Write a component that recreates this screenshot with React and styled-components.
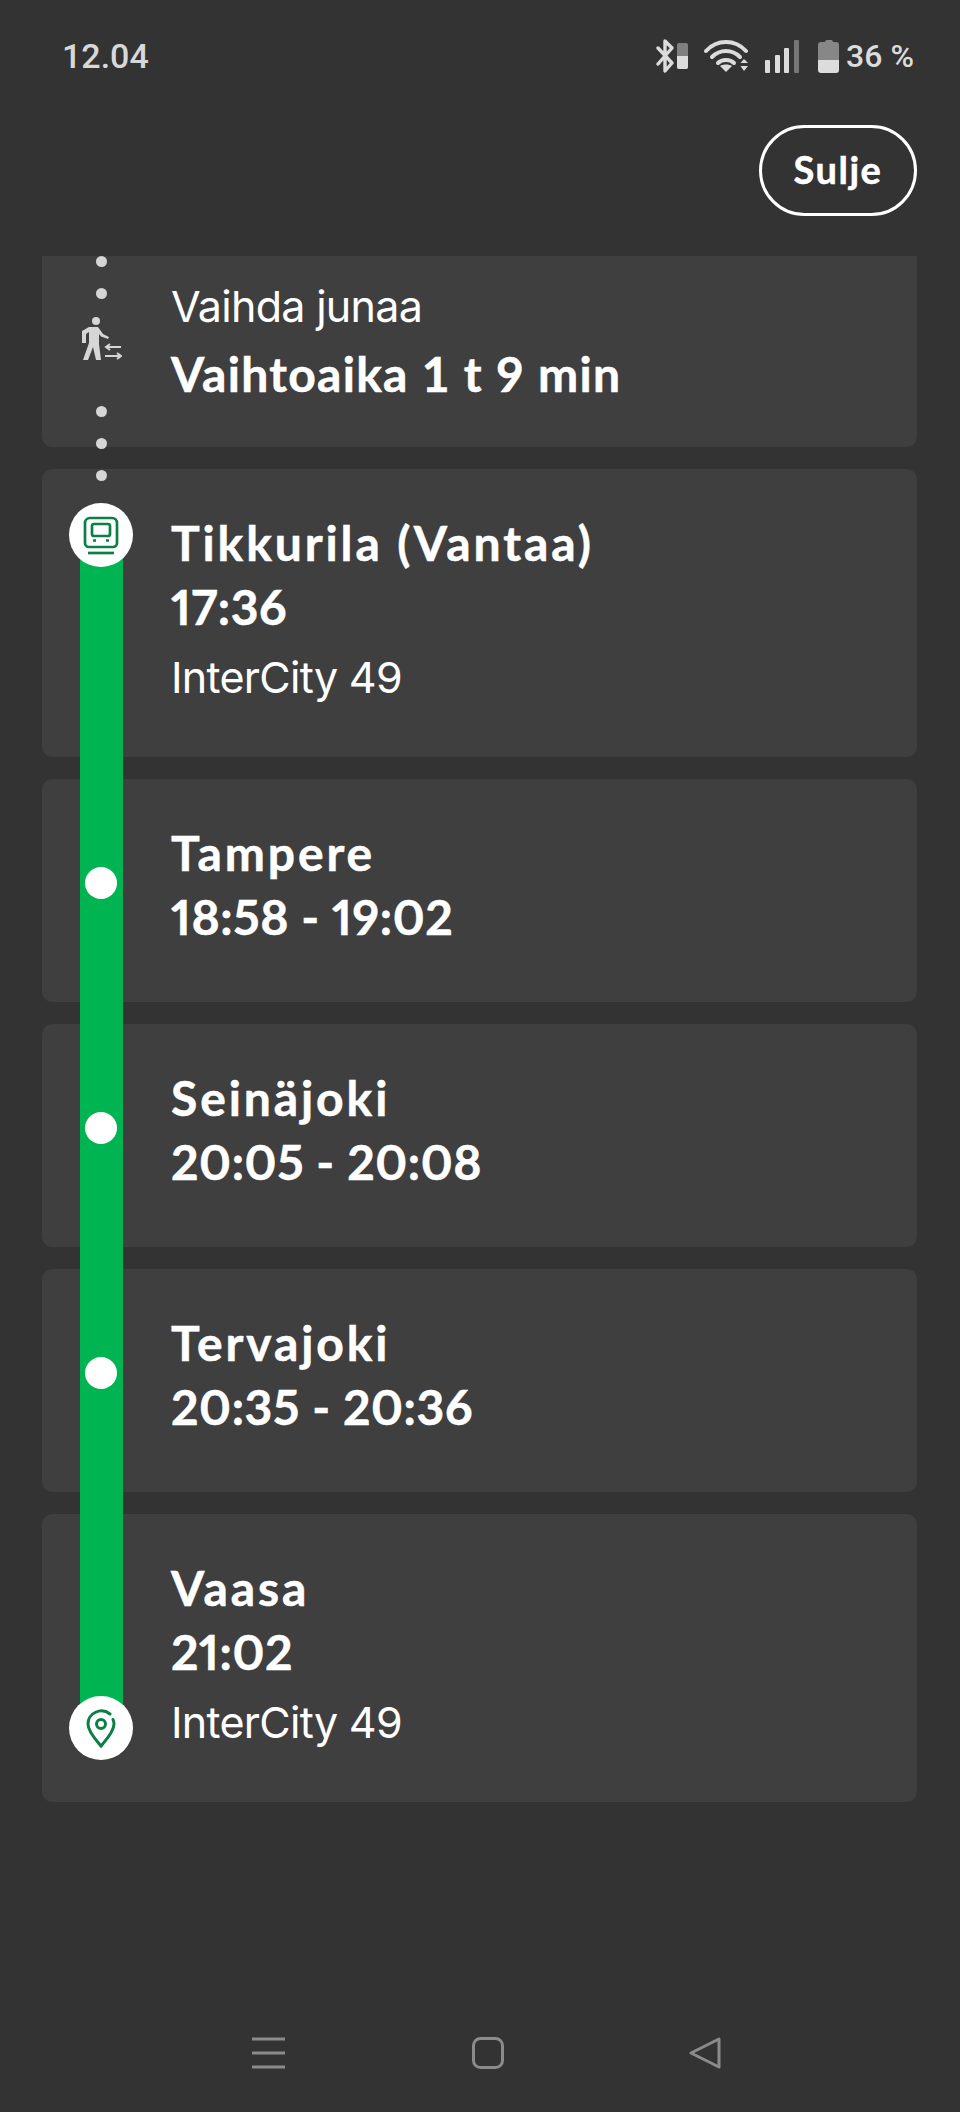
import styled, { createGlobalStyle } from 'styled-components';

const GREEN = '#00b451';
const ICON_GREEN = '#0c7f46';

const GlobalStyle = createGlobalStyle`
    html, body {
        margin: 0;
        padding: 0;
        background: #333333;
    }
`;

const Screen = styled.div`
    display: flex;
    flex-direction: column;
    width: 960px;
    height: 2112px;
    background: #333333;
    overflow: hidden;
    font-family: Lato, "Liberation Sans", sans-serif;
    color: #fff;
`;

const StatusBar = styled.div`
    display: flex;
    align-items: center;
    justify-content: space-between;
    height: 112px;
    padding: 0 46px 0 62px;
    box-sizing: border-box;
`;

const Clock = styled.span`
    font-family: Roboto, sans-serif;
    font-weight: 500;
    font-size: 34px;
    color: #d8d8d8;
`;

const StatusIcons = styled.div`
    display: flex;
    align-items: center;
    color: #dcdcdc;
`;

const IconGap = styled.span`
    width: ${({ $w }) => $w}px;
`;

const BatteryLabel = styled.span`
    font-family: Roboto, sans-serif;
    font-weight: 500;
    font-size: 32px;
    margin-left: 6px;
    color: #dcdcdc;
`;

const ActionRow = styled.div`
    display: flex;
    justify-content: flex-end;
    height: 144px;
    padding: 13px 43px 0 0;
    box-sizing: border-box;
`;

const CloseButton = styled.button`
    width: 158px;
    height: 91px;
    border: 3px solid #fff;
    border-radius: 46px;
    background: transparent;
    color: #fff;
    font-family: Lato, sans-serif;
    font-weight: 700;
    font-size: 38px;
    letter-spacing: 1.5px;
    -webkit-text-stroke: 0.5px #fff;
    padding: 0 0 3px;
`;

const List = styled.div`
    position: relative;
    display: flex;
    flex-direction: column;
    gap: 22px;
    flex: 1;
    padding: 0 43px 0 42px;
`;

const Card = styled.div`
    position: relative;
    background: #3f3f3f;
    border-radius: 10px;
    padding: 42px 0 ${({ $short }) => ($short ? '53px' : '54px')} 129px;
`;

const TransferCard = styled(Card)`
    border-radius: 0 0 10px 10px;
    padding: 18px 0 41px 129px;
`;

const Title = styled.div`
    font-weight: 700;
    font-size: 48px;
    line-height: 64px;
    letter-spacing: 2.9px;
    -webkit-text-stroke: 0.5px #fff;
`;

const Time = styled(Title)`
    font-variant-numeric: proportional-nums;
    letter-spacing: 0.6px;
`;

const Wait = styled(Title)`
    letter-spacing: 1.3px;
`;

const Sub = styled.div`
    font-family: Inter, sans-serif;
    font-weight: 400;
    font-size: 43px;
    letter-spacing: -0.7px;
    line-height: 52px;
    margin-top: 12px;
`;

const TransferLabel = styled(Sub)`
    line-height: 64px;
    margin-top: 0;
    margin-bottom: 4px;
`;

const Rail = styled.div`
    position: absolute;
    left: 80px;
    top: 279px;
    width: 43px;
    height: 1193px;
    background: ${GREEN};
`;

const Dot = styled.div`
    position: absolute;
    left: 96px;
    top: ${({ $top }) => $top}px;
    width: 11px;
    height: 11px;
    border-radius: 50%;
    background: #d6d6d6;
`;

const WalkIcon = styled.svg`
    position: absolute;
    left: 80px;
    top: 60px;
`;

const StopDot = styled.div`
    position: absolute;
    left: 43px;
    top: 88px;
    width: 32px;
    height: 32px;
    border-radius: 50%;
    background: #fff;
    z-index: 1;
`;

const StopBadge = styled.div`
    position: absolute;
    left: 27px;
    top: ${({ $top }) => $top}px;
    width: 64px;
    height: 64px;
    border-radius: 50%;
    background: #fff;
    display: flex;
    align-items: center;
    justify-content: center;
    z-index: 1;
`;

const NavBar = styled.div`
    display: flex;
    align-items: center;
    height: 32px;
    margin-bottom: 43px;
    padding-left: 252px;
    color: #8b8b8b;
`;

const NavSlot = styled.div`
    display: flex;
    width: ${({ $w }) => $w}px;
`;

const BluetoothIcon = () => (
    <svg width="32" height="34" viewBox="0 0 32 34" fill="none">
        <path d="M2 9 L16 24 L9 32 V2 L16 9 L2 25" stroke="currentColor" strokeWidth="3.4" strokeLinejoin="round" strokeLinecap="round" />
        <rect x="21" y="4" width="11" height="26" rx="2" fill="currentColor" opacity="0.45" />
        <path d="M21 17 H32 V28 a2 2 0 0 1 -2 2 H23 a2 2 0 0 1 -2 -2 Z" fill="currentColor" />
    </svg>
);

const WifiIcon = () => (
    <svg width="46" height="33" viewBox="0 0 46 33" fill="none">
        <g stroke="currentColor" strokeWidth="4" strokeLinecap="round">
            <path d="M2 11 C13 -1 31 -1 42 11" />
            <path d="M8 17 C16 9 28 9 36 17" />
            <path d="M14 23 C18 19 26 19 30 23" />
        </g>
        <path d="M16 26 C19 24 25 24 28 26 L22 32 Z" fill="currentColor" />
        <path d="M36.5 23 L40 19 L44 23 Z M36.5 26 H44 L40 31 Z" fill="currentColor" />
    </svg>
);

const SignalIcon = () => (
    <svg width="35" height="33" viewBox="0 0 35 33">
        <rect x="0" y="20" width="5" height="13" rx="1" fill="currentColor" />
        <rect x="10" y="15" width="5" height="18" rx="1" fill="currentColor" />
        <rect x="19" y="8" width="5" height="25" rx="1" fill="currentColor" />
        <rect x="29" y="0" width="5" height="33" rx="1" fill="currentColor" opacity="0.4" />
    </svg>
);

const BatteryIcon = () => (
    <svg width="22" height="34" viewBox="0 0 22 34">
        <path d="M7 3 a2 2 0 0 1 2 -2 h4 a2 2 0 0 1 2 2 h3 a3 3 0 0 1 3 3 v15 H0 V6 a3 3 0 0 1 3 -3 Z" fill="currentColor" opacity="0.5" />
        <path d="M0 21 H21 V31 a3 3 0 0 1 -3 3 H3 a3 3 0 0 1 -3 -3 Z" fill="currentColor" />
    </svg>
);

const TrainIcon = () => (
    <svg width="38" height="40" viewBox="0 0 38 40" fill="none" stroke={ICON_GREEN} strokeWidth="2.7">
        <path d="M8 3 H30 a5 5 0 0 1 5 5 V28 a4 4 0 0 1 -4 4 H7 a4 4 0 0 1 -4 -4 V8 a5 5 0 0 1 5 -5 Z" />
        <rect x="10" y="9" width="18" height="12" rx="2" />
        <path d="M11 25.500 H14 M24 25.500 H27" />
        <path d="M6 38 H32" />
    </svg>
);

const PinIcon = () => (
    <svg width="30" height="39" viewBox="0 0 30 39" fill="none" stroke={ICON_GREEN} strokeWidth="3" strokeLinecap="round">
        <path d="M24 5 C15 -2 2 4 2 15 C2 23 11 32 15 37 C19 32 28 23 28 15 C28 13 27.500 12 27 10.500" />
        <circle cx="15" cy="15" r="4.500" />
    </svg>
);

const Walker = () => (
    <WalkIcon width="42" height="46" viewBox="0 0 42 46" fill="none">
        <circle cx="16" cy="5" r="4" fill="#d6d6d6" />
        <path d="M9 11 H18 L23 18 L29 21 L28 23 L21 20.500 L19 18 V28 L21 44 H16 L13 31 L8 44 H3 L9 27 V16 L6 18 V27 H2 V15 Z" fill="#d6d6d6" />
        <g stroke="#d6d6d6" strokeWidth="2" fill="none">
            <path d="M41 31 H27 M30 28 L26 31 L30 34" />
            <path d="M25 40 H40 M37 37 L41 40 L37 43" />
        </g>
    </WalkIcon>
);

const stops = [
    { name: 'Tampere', time: '18:58 - 19:02' },
    { name: 'Seinäjoki', time: '20:05 - 20:08' },
    { name: 'Tervajoki', time: '20:35 - 20:36' },
];

export default function App() {
    return (
        <Screen>
            <GlobalStyle />
            <StatusBar>
                <Clock>12.04</Clock>
                <StatusIcons>
                    <BluetoothIcon />
                    <IconGap $w={16} />
                    <WifiIcon />
                    <IconGap $w={15} />
                    <SignalIcon />
                    <IconGap $w={18} />
                    <BatteryIcon />
                    <BatteryLabel>36 %</BatteryLabel>
                </StatusIcons>
            </StatusBar>
            <ActionRow>
                <CloseButton>Sulje</CloseButton>
            </ActionRow>
            <List>
                <TransferCard>
                    <TransferLabel>Vaihda junaa</TransferLabel>
                    <Wait>Vaihtoaika 1 t 9 min</Wait>
                </TransferCard>
                <Card>
                    <Title>Tikkurila (Vantaa)</Title>
                    <Time>17:36</Time>
                    <Sub>InterCity 49</Sub>
                    <StopBadge $top={34}><TrainIcon /></StopBadge>
                </Card>
                {stops.map((stop) => (
                    <Card key={stop.name} $short>
                        <Title>{stop.name}</Title>
                        <Time>{stop.time}</Time>
                        <StopDot />
                    </Card>
                ))}
                <Card>
                    <Title>Vaasa</Title>
                    <Time>21:02</Time>
                    <Sub>InterCity 49</Sub>
                    <StopBadge $top={182}><PinIcon /></StopBadge>
                </Card>
                <Rail />
                {[0, 32, 150, 182, 214].map((top) => <Dot key={top} $top={top} />)}
                <Walker />
            </List>
            <NavBar>
                <NavSlot $w={220}>
                    <svg width="33" height="32" viewBox="0 0 33 32" stroke="currentColor" strokeWidth="3">
                        <path d="M0 2 H33 M0 16 H33 M0 30 H33" />
                    </svg>
                </NavSlot>
                <NavSlot $w={217}>
                    <svg width="32" height="32" viewBox="0 0 32 32" fill="none" stroke="currentColor" strokeWidth="3">
                        <rect x="1.500" y="1.500" width="29" height="29" rx="7" />
                    </svg>
                </NavSlot>
                <NavSlot $w={32}>
                    <svg width="32" height="32" viewBox="0 0 32 32" fill="none" stroke="currentColor" strokeWidth="3" strokeLinejoin="round">
                        <path d="M30 2 V30 L2 16 Z" />
                    </svg>
                </NavSlot>
            </NavBar>
        </Screen>
    );
}
